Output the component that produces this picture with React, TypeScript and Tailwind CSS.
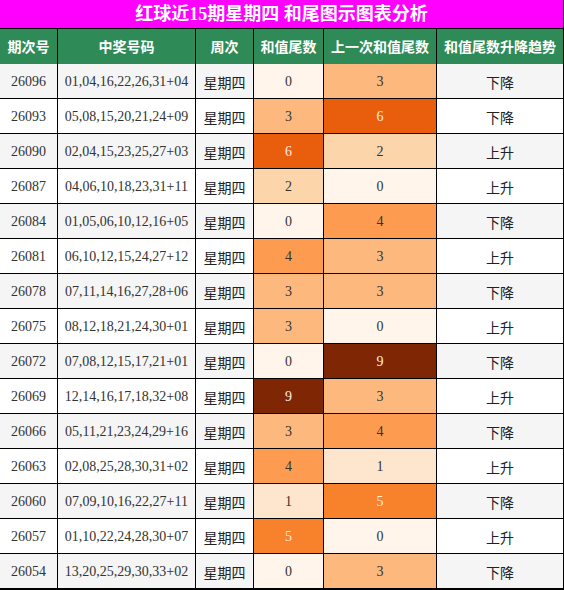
import React from 'react';

interface Row {
  issue: string;
  numbers: string;
  sum: number;
  prev: number;
  trend: string;
}

const rows: Row[] = [
  { issue: '26096', numbers: '01,04,16,22,26,31+04', sum: 0, prev: 3, trend: '下降' },
  { issue: '26093', numbers: '05,08,15,20,21,24+09', sum: 3, prev: 6, trend: '下降' },
  { issue: '26090', numbers: '02,04,15,23,25,27+03', sum: 6, prev: 2, trend: '上升' },
  { issue: '26087', numbers: '04,06,10,18,23,31+11', sum: 2, prev: 0, trend: '上升' },
  { issue: '26084', numbers: '01,05,06,10,12,16+05', sum: 0, prev: 4, trend: '下降' },
  { issue: '26081', numbers: '06,10,12,15,24,27+12', sum: 4, prev: 3, trend: '上升' },
  { issue: '26078', numbers: '07,11,14,16,27,28+06', sum: 3, prev: 3, trend: '下降' },
  { issue: '26075', numbers: '08,12,18,21,24,30+01', sum: 3, prev: 0, trend: '上升' },
  { issue: '26072', numbers: '07,08,12,15,17,21+01', sum: 0, prev: 9, trend: '下降' },
  { issue: '26069', numbers: '12,14,16,17,18,32+08', sum: 9, prev: 3, trend: '上升' },
  { issue: '26066', numbers: '05,11,21,23,24,29+16', sum: 3, prev: 4, trend: '下降' },
  { issue: '26063', numbers: '02,08,25,28,30,31+02', sum: 4, prev: 1, trend: '上升' },
  { issue: '26060', numbers: '07,09,10,16,22,27+11', sum: 1, prev: 5, trend: '下降' },
  { issue: '26057', numbers: '01,10,22,24,28,30+07', sum: 5, prev: 0, trend: '上升' },
  { issue: '26054', numbers: '13,20,25,29,30,33+02', sum: 0, prev: 3, trend: '下降' },
];

// heat colours for tail digits 0-9
const heat: string[] = [
  'bg-[#fff5eb] text-[#333]',
  'bg-[#fee6ce] text-[#333]',
  'bg-[#fdd5ab] text-[#333]',
  'bg-[#fdb97d] text-[#333]',
  'bg-[#fd9c51] text-[#333]',
  'bg-[#f8812c] text-[#fdeee0]',
  'bg-[#e95e0d] text-[#fdeee0]',
  'bg-[#cc4c02] text-[#fdeee0]',
  'bg-[#a33a03] text-[#fdeee0]',
  'bg-[#7f2704] text-[#fdeee0]',
];

const headers = ['期次号', '中奖号码', '周次', '和值尾数', '上一次和值尾数', '和值尾数升降趋势'];

const serif = "font-['Liberation_Serif','Noto_Sans_CJK_SC',serif]";
const sans = "font-['Noto_Sans_CJK_SC','Liberation_Sans',sans-serif]";

export default function App() {
  return (
    <div className="w-[564px] h-[590px] bg-black flex flex-col gap-px pr-px pb-px">
      <div className={`h-[28px] bg-[#ff00ff] flex items-center justify-center text-white text-[18px] font-bold ${serif}`}>
        红球近15期星期四 和尾图示图表分析
      </div>
      <div className="grid grid-cols-[57px_137px_57px_69px_112px_126px] auto-rows-[34px] gap-px">
        {headers.map((h) => (
          <div
            key={h}
            className={`h-[35px] bg-[#2e8b57] text-white text-[14px] font-bold flex items-center justify-center ${sans}`}
          >
            {h}
          </div>
        ))}
        {rows.map((r, i) => {
          const base = i % 2 === 0 ? 'bg-[#f5f5f5]' : 'bg-white';
          return (
            <React.Fragment key={r.issue}>
              <div className={`${base} ${serif} text-[14px] text-[#333] flex items-center justify-center`}>{r.issue}</div>
              <div className={`${base} ${serif} text-[14px] text-[#333] flex items-center justify-center`}>{r.numbers}</div>
              <div className={`${base} ${sans} text-[14px] text-[#222] flex items-center justify-center pt-[2px]`}>星期四</div>
              <div className={`${heat[r.sum]} ${serif} text-[14px] flex items-center justify-center`}>{r.sum}</div>
              <div className={`${heat[r.prev]} ${serif} text-[14px] flex items-center justify-center`}>{r.prev}</div>
              <div className={`${base} ${sans} text-[14px] text-[#222] flex items-center justify-center pt-[2px]`}>{r.trend}</div>
            </React.Fragment>
          );
        })}
      </div>
    </div>
  );
}
